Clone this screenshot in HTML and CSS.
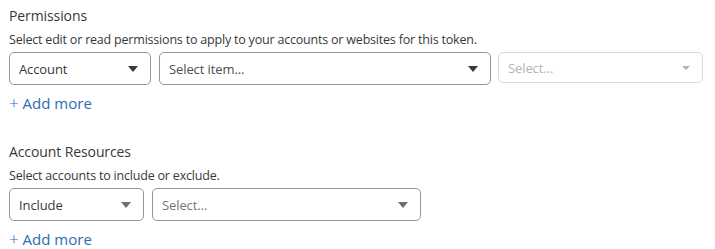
FILE: index.html
```html
<!DOCTYPE html>
<html>
<head>
<meta charset="utf-8">
<link rel="stylesheet" href="styles.css">
</head>
<body>
<section class="group">
  <h3 class="title">Permissions</h3>
  <p class="desc">Select edit or read permissions to apply to your accounts or websites for this token.</p>
  <div class="row">
    <div class="select w-account"><span class="val">Account</span><span class="caret"></span></div>
    <div class="select w-item"><span class="val">Select item...</span><span class="caret"></span></div>
    <div class="select w-perm disabled"><span class="val">Select...</span><span class="caret"></span></div>
  </div>
  <a class="add" href="#"><span class="plus">+</span> Add more</a>
</section>
<section class="group second">
  <h3 class="title">Account Resources</h3>
  <p class="desc">Select accounts to include or exclude.</p>
  <div class="row">
    <div class="select w-include"><span class="val">Include</span><span class="caret"></span></div>
    <div class="select w-res"><span class="val placeholder">Select...</span><span class="caret"></span></div>
  </div>
  <a class="add" href="#"><span class="plus">+</span> Add more</a>
</section>
</body>
</html>
```
FILE: styles.css
```css
html, body { margin: 0; padding: 0; background: #fff; }
body {
  font-family: "Open Sans", "Noto Sans", sans-serif;
  color: #36393a;
  padding: 6px 9px 0 9px;
}
.group { display: flex; flex-direction: column; align-items: flex-start; }
.second { margin-top: 29px; }
.title { margin: 0; font-size: 14px; font-weight: 400; line-height: 20px; color: #36393a; letter-spacing: -0.1px; }
.desc { margin: 5px 0 0; font-size: 12.5px; line-height: 18px; color: #36393a; letter-spacing: -0.2px; }
.row { display: flex; gap: 8px; margin-top: 3px; }
.select {
  box-sizing: border-box;
  height: 33px;
  border: 1px solid #92979b;
  border-radius: 5px;
  display: flex;
  align-items: center;
  justify-content: space-between;
  padding: 0 12px 0 9px;
  font-size: 13px;
  letter-spacing: -0.1px;
  color: #36393a;
}
.select .caret {
  width: 0; height: 0;
  border-left: 5px solid transparent;
  border-right: 5px solid transparent;
  border-top: 6px solid #36393a;
}
.select.disabled { border-color: #d9d9d9; color: #b3b3b3; height: 31px; }
.select.disabled .caret { border-top-color: #b3b3b3; border-left-width: 4px; border-right-width: 4px; border-top-width: 4px; }
.select.w-include .caret, .select.w-res .caret { border-top-color: #6b6f72; }
.placeholder { color: #72777b; }
.w-item .val { color: #4a4e51; }
.w-account { width: 142px; }
.w-item { width: 332px; }
.w-perm { width: 205px; margin-left: -1px; }
.w-include { width: 135px; }
.w-res { width: 269px; }
.add {
  margin-top: 8px;
  font-size: 15px;
  line-height: 20px;
  color: #2c6cb5;
  text-decoration: none;
}
.add .plus { font-weight: 300; font-size: 17px; line-height: 20px; }
```
